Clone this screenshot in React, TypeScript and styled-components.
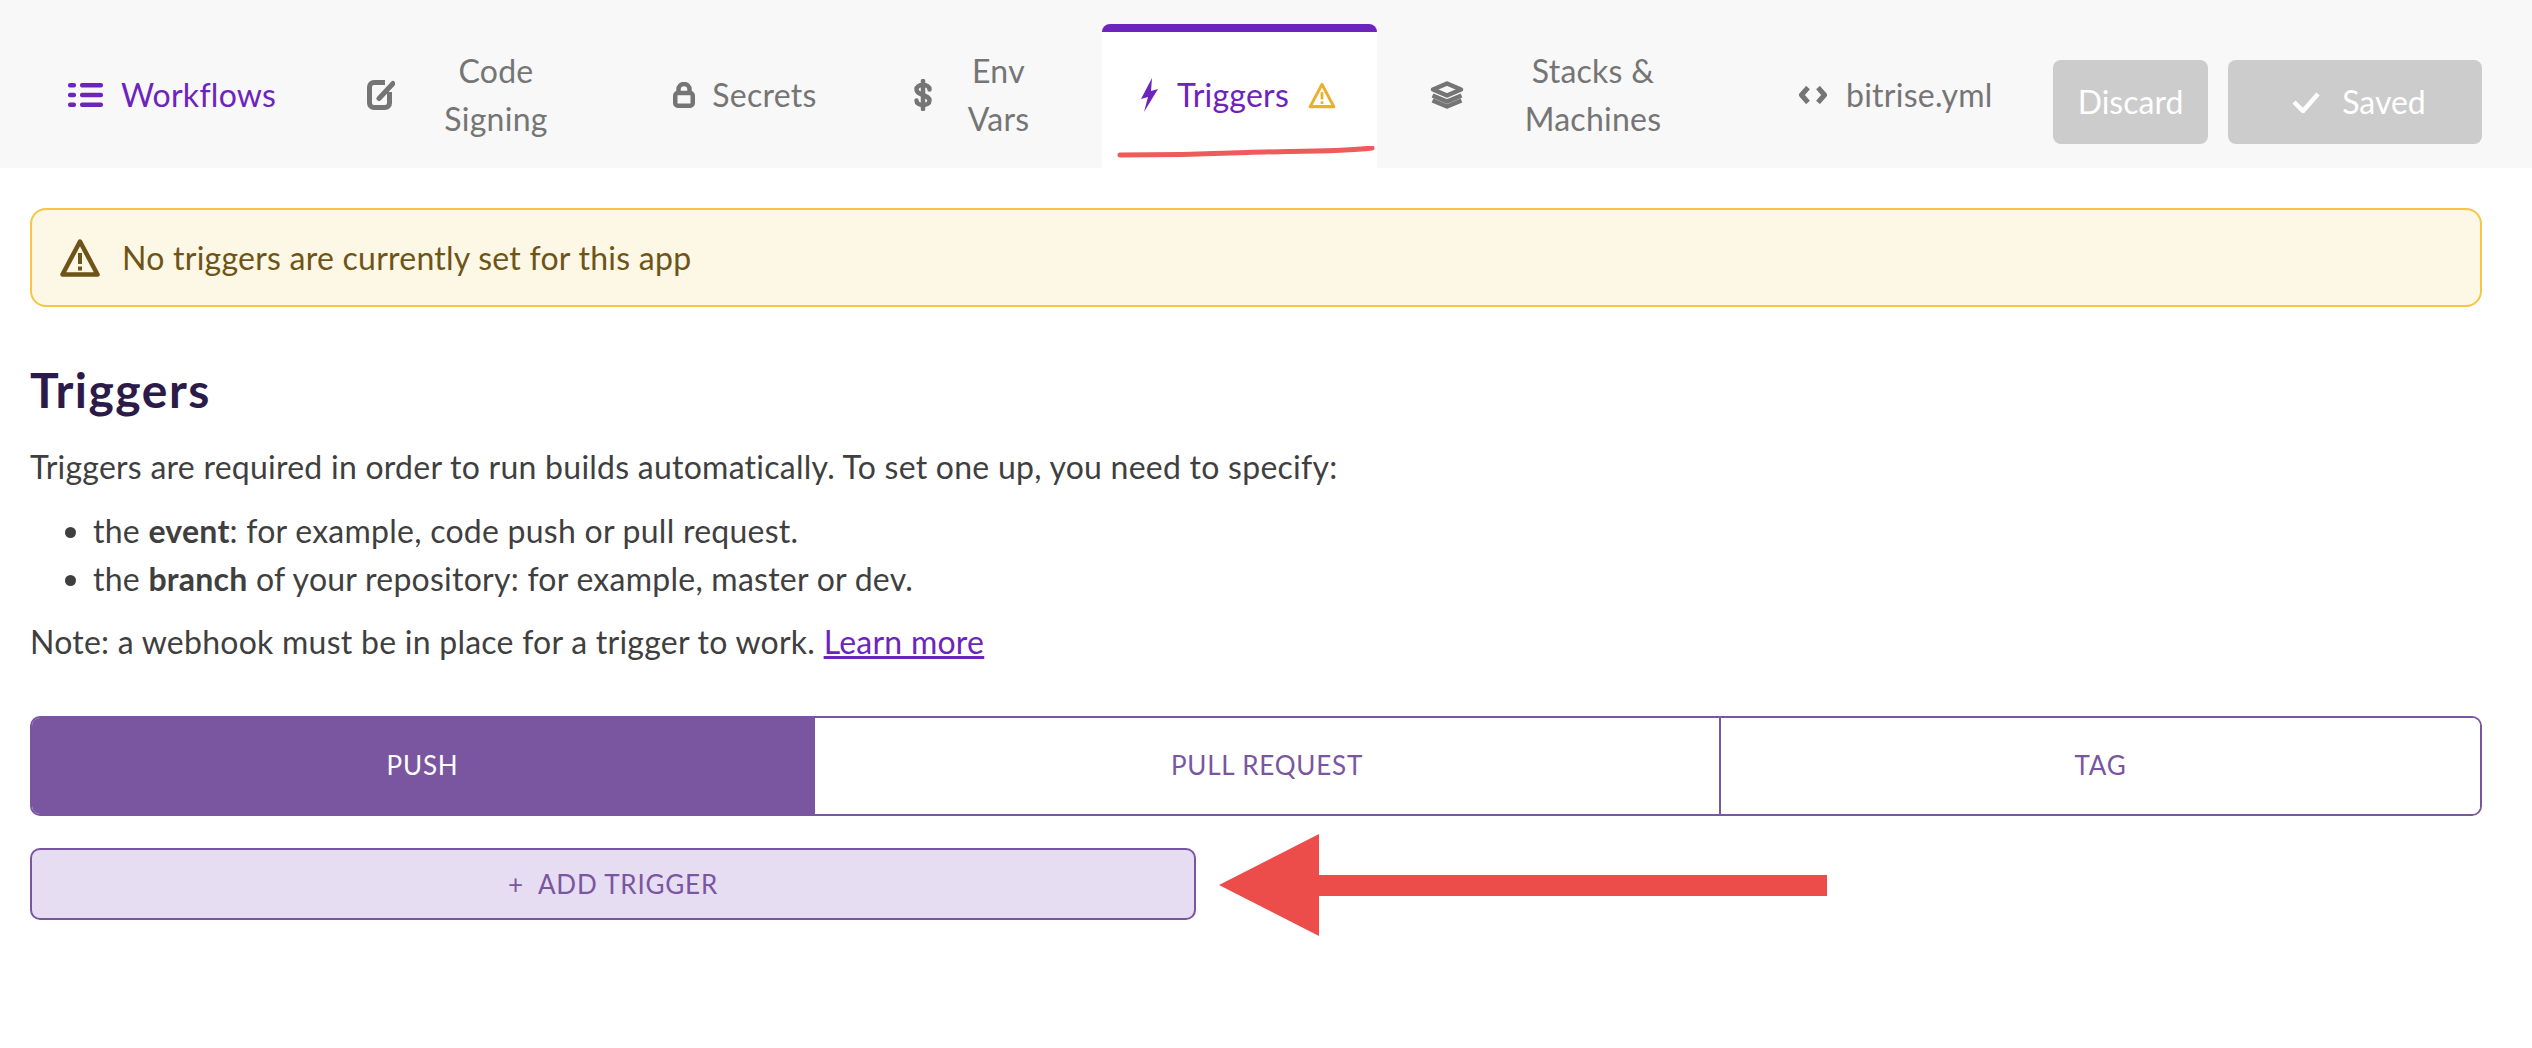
import React from "react";
import styled, { createGlobalStyle } from "styled-components";

const purple = "#6c24bd";
const gray = "#757575";
const segment = "#7a55a0";

const GlobalStyle = createGlobalStyle`
  html, body {
    margin: 0;
    padding: 0;
    background: #fff;
  }
  body {
    font-family: Lato, "Open Sans", sans-serif;
    font-size: 32px;
    line-height: 48px;
    letter-spacing: 0.25px;
    color: #3f3f3f;
  }
`;

const ListIcon = () => (
  <svg width="35" height="24" viewBox="0 0 35 24" fill="currentColor">
    <rect x="0" y="0" width="8" height="4.500" rx="2" />
    <rect x="0" y="9.750" width="8" height="4.500" rx="2" />
    <rect x="0" y="19.500" width="8" height="4.500" rx="2" />
    <rect x="12" y="0" width="23" height="4.500" rx="2" />
    <rect x="12" y="9.750" width="23" height="4.500" rx="2" />
    <rect x="12" y="19.500" width="23" height="4.500" rx="2" />
  </svg>
);

const SigningIcon = () => (
  <svg width="28" height="30" viewBox="0 0 28 30" fill="none" stroke="currentColor" strokeWidth="5">
    <path d="M18 2.500H7a4.500 4.500 0 0 0-4.500 4.500v16A4.500 4.500 0 0 0 7 27.500h11a4.500 4.500 0 0 0 4.500-4.500V12" />
    <path d="M12 18.500L26 3.500" strokeLinecap="round" />
  </svg>
);

const LockIcon = () => (
  <svg width="22" height="26" viewBox="0 0 22 26" fill="none" stroke="currentColor" strokeWidth="4.500">
    <rect x="2.250" y="11" width="17.500" height="12.750" rx="2.500" />
    <path d="M5.500 11V7.500a5.500 5.500 0 0 1 11 0V11" />
  </svg>
);

const DollarIcon = () => (
  <svg width="20" height="32" viewBox="0 0 20 32" fill="none" stroke="currentColor" strokeWidth="4.500" strokeLinecap="round">
    <path d="M16.500 10.500C16.500 7.500 13.500 6 10 6S3.500 7.500 3.500 10.500 6.500 14.500 10 16s6.500 2.500 6.500 5.500S13.500 26 10 26s-6.500-1.500-6.500-4.500" />
    <path d="M10 2v28" />
  </svg>
);

const BoltIcon = () => (
  <svg width="18" height="34" viewBox="0 0 18 34" fill="currentColor">
    <path d="M12 0L1 21l7-2L4 34 18 11l-7 2z" />
  </svg>
);

const WarningIcon = ({ width, height }: { width: number; height: number }) => (
  <svg width={width} height={height} viewBox="0 0 40 40" fill="currentColor">
    <path
      d="M20 3.500L37.500 36.500H2.500z"
      fill="none"
      stroke="currentColor"
      strokeWidth="4.500"
      strokeLinejoin="round"
    />
    <rect x="18" y="15" width="4" height="11" />
    <rect x="18" y="28.500" width="4" height="4" />
  </svg>
);

const StackIcon = () => (
  <svg width="34" height="28" viewBox="0 0 34 28" fill="none" stroke="currentColor" strokeWidth="4.500" strokeLinejoin="round">
    <path d="M17 2.500L31 8.500 17 14.500 3 8.500z" />
    <path d="M2.500 14.500L17 20.500 31.500 14.500M2.500 19.500L17 25.500 31.500 19.500" />
  </svg>
);

const CodeIcon = () => (
  <svg width="30" height="18" viewBox="0 0 30 18" fill="none" stroke="currentColor" strokeWidth="5" strokeLinejoin="round">
    <path d="M10 1.500L3.500 9l6.500 7.500M20 1.500L26.500 9 20 16.500" />
  </svg>
);

const CheckIcon = () => (
  <svg width="28" height="21" viewBox="0 0 28 21" fill="none" stroke="currentColor" strokeWidth="4.500">
    <path d="M2 10l9 9L26 2" />
  </svg>
);

type TabItem = {
  label: string;
  icon: React.ReactNode;
  width: number;
  gap?: number;
  active?: boolean;
};

const leadingTabs: TabItem[] = [
  { label: "Workflows", icon: <ListIcon />, width: 152, active: true },
  { label: "Code Signing", icon: <SigningIcon />, width: 166 },
  { label: "Secrets", icon: <LockIcon />, width: 109, gap: 15 },
  { label: "Env Vars", icon: <DollarIcon />, width: 95 },
];

const trailingTabs: TabItem[] = [
  { label: "Stacks & Machines", icon: <StackIcon />, width: 222 },
  { label: "bitrise.yml", icon: <CodeIcon />, width: 146 },
];

const renderTab = (tab: TabItem) => (
  <Tab key={tab.label} $active={tab.active} $gap={tab.gap}>
    {tab.icon}
    <TabLabel $width={tab.width}>{tab.label}</TabLabel>
  </Tab>
);

const App = () => (
  <>
    <GlobalStyle />
    <Header>
      <Nav>
        {leadingTabs.map(renderTab)}
        <CurrentTab>
          <BoltIcon />
          <TabLabel $width={114}>Triggers</TabLabel>
          <TabWarning>
            <WarningIcon width={28} height={27} />
          </TabWarning>
          <Scribble width="260" height="12" viewBox="0 0 260 12" fill="none">
            <path d="M3 9C60 9 90 8 130 6.500S220 6 255 2" stroke="#ef5a5a" strokeWidth="5" strokeLinecap="round" />
          </Scribble>
        </CurrentTab>
        {trailingTabs.map(renderTab)}
      </Nav>
      <Actions>
        <ActionButton $width={155}>Discard</ActionButton>
        <SavedButton $width={254}>
          <CheckIcon />
          Saved
        </SavedButton>
      </Actions>
    </Header>
    <Main>
      <Notice>
        <WarningIcon width={40} height={40} />
        No triggers are currently set for this app
      </Notice>
      <Title>Triggers</Title>
      <Text>
        Triggers are required in order to run builds automatically. To set one up, you need to specify:
      </Text>
      <List>
        <li>
          the <b>event</b>: for example, code push or pull request.
        </li>
        <li>
          the <b>branch</b> of your repository: for example, master or dev.
        </li>
      </List>
      <NoteText>
        Note: a webhook must be in place for a trigger to work. <a href="#learn">Learn more</a>
      </NoteText>
      <Segments>
        <Segment $width={783} $selected>PUSH</Segment>
        <Segment $width={906}>PULL REQUEST</Segment>
        <Segment>TAG</Segment>
      </Segments>
      <AddRow>
        <AddButton>+&nbsp;&nbsp;ADD TRIGGER</AddButton>
        <Arrow width="610" height="102" viewBox="0 0 610 102">
          <path d="M0 51L100 0V41H608V62H100V102z" fill="#ec4c4a" />
        </Arrow>
      </AddRow>
    </Main>
  </>
);

export default App;

const Header = styled.header`
  display: flex;
  justify-content: space-between;
  height: 168px;
  padding: 0 50px 0 30px;
  background: #f8f8f8;
`;

const Nav = styled.nav`
  display: flex;
  gap: 18px;
`;

const Tab = styled.a<{ $active?: boolean; $gap?: number }>`
  display: flex;
  align-items: center;
  gap: ${(p) => p.$gap ?? 18}px;
  box-sizing: border-box;
  height: 144px;
  margin-top: 24px;
  padding: 0 38px 2px;
  color: ${(p) => (p.$active ? purple : gray)};
`;

const CurrentTab = styled(Tab)`
  position: relative;
  margin-right: -3px;
  border-top: 8px solid ${purple};
  border-radius: 8px 8px 0 0;
  background: #fff;
  color: ${purple};
  padding-bottom: 10px;
`;

const TabLabel = styled.span<{ $width: number }>`
  width: ${(p) => p.$width}px;
  text-align: center;
`;

const TabWarning = styled.span`
  display: flex;
  margin-right: 3px;
  color: #e8b02e;
`;

const Scribble = styled.svg`
  position: absolute;
  left: 15px;
  top: 114px;
`;

const Actions = styled.div`
  display: flex;
  gap: 20px;
  padding-top: 60px;
`;

const ActionButton = styled.button<{ $width: number }>`
  display: flex;
  align-items: center;
  justify-content: center;
  gap: 22px;
  width: ${(p) => p.$width}px;
  height: 84px;
  padding: 0;
  border: 0;
  border-radius: 8px;
  background: #cccccc;
  color: #fff;
  font: inherit;
`;

const SavedButton = styled(ActionButton)`
  padding-left: 8px;
`;

const Main = styled.main`
  padding: 40px 50px 128px 30px;
`;

const Notice = styled.div`
  display: flex;
  align-items: center;
  gap: 22px;
  box-sizing: border-box;
  height: 99px;
  padding-left: 28px;
  border: 2px solid #f6c544;
  border-radius: 16px;
  background: #fdf8e6;
  color: #6e5417;
`;

const Title = styled.h1`
  margin: 53px 0 0;
  color: #2c1a48;
  font-size: 48px;
  line-height: 60px;
  font-weight: 700;
  letter-spacing: 1.5px;
`;

const Text = styled.p`
  margin: 23px 0 0;
  a {
    color: ${purple};
  }
`;

const NoteText = styled(Text)`
  margin-top: 15px;
`;

const List = styled.ul`
  margin: 16px 0 0;
  padding-left: 63px;
  li {
    height: 48px;
  }
`;

const Segments = styled.div`
  display: flex;
  box-sizing: border-box;
  height: 100px;
  margin-top: 50px;
  border: 2px solid ${segment};
  border-radius: 10px;
  overflow: hidden;
`;

const Segment = styled.div<{ $width?: number; $selected?: boolean }>`
  display: flex;
  align-items: center;
  justify-content: center;
  flex: ${(p) => (p.$width ? `0 0 ${p.$width}px` : "1")};
  box-sizing: border-box;
  padding-bottom: 2px;
  background: ${(p) => (p.$selected ? segment : "#fff")};
  color: ${(p) => (p.$selected ? "#fff" : segment)};
  font-size: 26px;
  letter-spacing: 0.8px;
  border-right: 2px solid ${segment};
  &:last-child {
    border-right: 0;
  }
`;

const AddRow = styled.div`
  position: relative;
  margin-top: 32px;
`;

const AddButton = styled.button`
  display: block;
  box-sizing: border-box;
  width: 1166px;
  height: 72px;
  border: 2px solid ${segment};
  border-radius: 10px;
  background: #e7ddf3;
  color: ${segment};
  font: inherit;
  font-size: 26px;
  line-height: 1;
  letter-spacing: 0.8px;
`;

const Arrow = styled.svg`
  position: absolute;
  left: 1189px;
  top: -14px;
`;
